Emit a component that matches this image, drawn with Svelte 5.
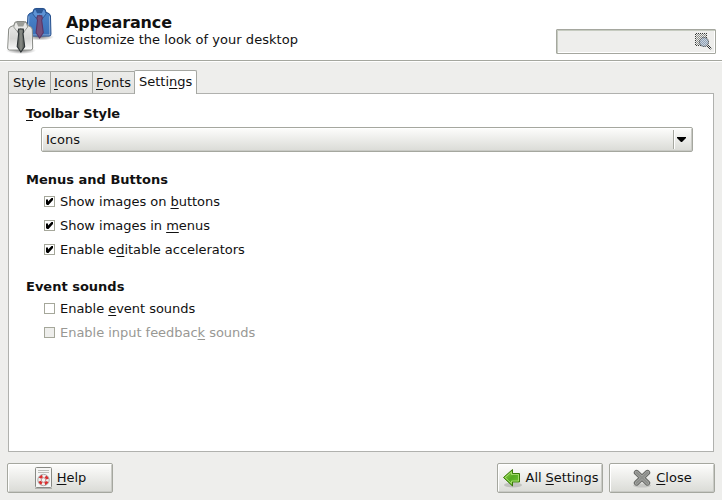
<script>
  const tabs = [
    { pre: 'Style', key: '', post: '', w: 42 },
    { pre: '', key: 'I', post: 'cons', w: 42 },
    { pre: '', key: 'F', post: 'onts', w: 42 },
    { pre: 'Setti', key: 'n', post: 'gs', w: 63, active: true }
  ];
  const menus = [
    { pre: 'Show images on ', key: 'b', post: 'uttons', checked: true },
    { pre: 'Show images in ', key: 'm', post: 'enus', checked: true },
    { pre: 'Enable e', key: 'd', post: 'itable accelerators', checked: true }
  ];
  const sounds = [
    { pre: 'Enable ', key: 'e', post: 'vent sounds' },
    { pre: 'Enable input feedbac', key: 'k', post: ' sounds', disabled: true }
  ];
</script>

{#snippet label(t)}<span class="label">{t.pre}<u>{t.key}</u>{t.post}</span>{/snippet}

{#snippet checks(items)}
  <div class="checks">
    {#each items as c}
      <div class="check" class:disabled={c.disabled}>
        <span class="box">
          {#if c.checked}
            <svg width="9" height="9" viewBox="0 0 9 9"><path d="M1 2.500H3V4.500L6.500 1H8V3L3.500 8H2L1 7Z" fill="#000" /></svg>
          {/if}
        </span>
        {@render label(c)}
      </div>
    {/each}
  </div>
{/snippet}

{#snippet shirt(body, edge, collar, tie, tieEdge)}
  <path d="M8 2.500Q8.500 1 10 1H18Q19.500 1 20 2.500L21 5Q25 6 25.500 8.500L26 27.500Q26 29.500 24 29.500H3Q1 29.500 1 27.500L2 8.500Q2.500 6 7 5Z" fill={body} stroke={edge} />
  <path d="M3 9 2.200 28.300H24.800L24.400 9" fill="none" stroke="#fff" stroke-opacity=".4" />
  <path d="M8.500 2H19.500L21 6.500 17.500 11 14 8 10.500 11 7 6.500Z" fill={collar} stroke={edge} stroke-width=".8" />
  <path d="M10 2.500H18L16.500 6H11.500Z" fill={edge} opacity=".8" />
  <path d="M12 8.500H16.500L17 11.500 16.300 13 18 26 14.200 31.500 10.500 26 12 13 11.300 11.500Z" fill={tie} stroke={tieEdge} stroke-width="1.100" />
{/snippet}

<div class="window">
  <header>
    <svg class="logo" width="48" height="48" viewBox="0 0 48 48">
      <defs>
        <linearGradient id="white" x2="0" y2="1"><stop stop-color="#eeeeec" /><stop offset=".6" stop-color="#d6d6d4" /><stop offset="1" stop-color="#fafafa" /></linearGradient>
        <linearGradient id="blue" x2="0" y2="1"><stop stop-color="#4d86cc" /><stop offset="1" stop-color="#3a70b8" /></linearGradient>
        <linearGradient id="black" x2="1" y2="0"><stop stop-color="#4c504c" /><stop offset=".5" stop-color="#8a8d88" /><stop offset="1" stop-color="#4c504c" /></linearGradient>
        <radialGradient id="shade"><stop stop-color="#000" stop-opacity=".5" /><stop offset="1" stop-color="#000" stop-opacity="0" /></radialGradient>
      </defs>
      <ellipse cx="34" cy="31" rx="14" ry="3.500" fill="url(#shade)" />
      <g transform="translate(20 1.500) scale(.96 .97)">{@render shirt('url(#blue)', '#204a87', '#5e93d5', '#75507b', '#5c3566')}</g>
      <ellipse cx="15" cy="44.500" rx="15" ry="3.500" fill="url(#shade)" />
      <g transform="translate(.700 14.500)">{@render shirt('url(#white)', '#888a85', '#e8e8e6', 'url(#black)', '#2e3436')}</g>
    </svg>
    <div class="titles">
      <h1>Appearance</h1>
      <p>Customize the look of your desktop</p>
    </div>
    <div class="search">
      <svg width="17" height="17" viewBox="0 0 17 17">
        <defs>
          <pattern id="dots" width="2" height="2" patternUnits="userSpaceOnUse"><path d="M0 0h1v1H0zM1 1h1v1H1z" fill="#eeeeec" /></pattern>
        </defs>
        <rect x=".5" y=".5" width="11" height="12" fill="#8c8e8a" stroke="#333533" />
        <path d="m12.500 12.500 2.500 2.500" stroke="#303436" stroke-width="3" stroke-linecap="round" />
        <circle cx="9" cy="9" r="4.500" fill="#7189a5" stroke="#3d4246" />
        <rect width="17" height="17" fill="url(#dots)" />
        <circle cx="9" cy="9" r="4.500" fill="#a9bacb" fill-opacity=".5" stroke="#666b70" stroke-opacity=".6" />
      </svg>
    </div>
  </header>

  <main>
    <nav>
      {#each tabs as t}
        <div class="tab" class:active={t.active} style:width="{t.w}px">{@render label(t)}</div>
      {/each}
    </nav>
    <section class="panel">
      <h2><u>T</u>oolbar Style</h2>
      <div class="combo">
        <span>Icons</span>
        <i><svg width="9" height="5" viewBox="0 0 9 5"><path d="M0 0H9V1L5 5H4L0 1Z" fill="#000" /></svg></i>
      </div>
      <h2 class="menus">Menus and Buttons</h2>
      {@render checks(menus)}
      <h2 class="events">Event sounds</h2>
      {@render checks(sounds)}
    </section>
  </main>

  <footer>
    <div class="button">
      <svg width="19" height="22" viewBox="0 0 19 22">
        <rect x="1.500" y=".5" width="16" height="20" rx="1" fill="#f6f6f5" stroke="#888a85" />
        <path d="M1 21.500H18" stroke="#000" stroke-opacity=".2" />
        <path d="M4 3.500H15M4 5.500H15" stroke="#bbbdb8" />
        <circle cx="9.500" cy="13" r="4.200" fill="none" stroke="#f2efed" stroke-width="3.600" />
        <circle cx="9.500" cy="13" r="4" fill="none" stroke="#dc3030" stroke-width="3" stroke-dasharray="3.140 3.140" stroke-dashoffset="-1.570" />
        <circle cx="9.500" cy="13" r="5.700" fill="none" stroke="#999" stroke-width=".8" />
        <circle cx="9.500" cy="13" r="2.300" fill="#f6f6f5" stroke="#a66" stroke-width=".7" />
      </svg>
      <span><u>H</u>elp</span>
    </div>
    <div class="button push">
      <svg width="20" height="20" viewBox="0 0 20 20">
        <defs><linearGradient id="green" x2="1" y2="1"><stop stop-color="#9bdc55" /><stop offset=".5" stop-color="#55aa20" /><stop offset="1" stop-color="#73c934" /></linearGradient></defs>
        <ellipse cx="11" cy="17" rx="9" ry="2.500" fill="#000" opacity=".15" />
        <path d="M1.500 9.500 10.500 1.500V5.500H17.500V14H10.500V18Z" fill="url(#green)" stroke="#3a7a08" stroke-linejoin="round" />
        <path d="M3.200 9.500 9.500 4V6.500H16.500V13H9.500V15.500Z" fill="none" stroke="#c4f08e" stroke-opacity=".65" />
      </svg>
      <span>All <u>S</u>ettings</span>
    </div>
    <div class="button">
      <svg width="20" height="20" viewBox="0 0 20 20">
        <ellipse cx="10" cy="17.500" rx="9" ry="2" fill="#000" opacity=".12" />
        <path d="M4.500 4.500 15.500 15M15.500 4.500 4.500 15" stroke="#666864" stroke-width="5.400" stroke-linecap="round" />
        <path d="M4.500 4.500 15.500 15M15.500 4.500 4.500 15" stroke="#a9aaa7" stroke-width="3.400" stroke-linecap="round" />
        <path d="M4.500 4.500 15.500 15M15.500 4.500 4.500 15" stroke="#8d8f8b" stroke-width="1.800" stroke-linecap="round" />
      </svg>
      <span><u>C</u>lose</span>
    </div>
  </footer>
</div>

<style>
  .window {
    box-sizing: border-box;
    width: 722px;
    height: 500px;
    display: flex;
    flex-direction: column;
    overflow: hidden;
    background: #eeeeec;
    color: #111;
    font: 13px/16px 'DejaVu Sans', sans-serif;
  }
  h1, h2, p { margin: 0; }
  u {
    text-decoration: underline 1px;
    text-underline-offset: 2px;
    text-decoration-skip-ink: none;
  }
  header {
    box-sizing: border-box;
    height: 61px;
    flex: none;
    display: flex;
    background: #fff;
    border-bottom: 1px solid #a5a79f;
    box-shadow: 0 1px #fff;
    padding: 6px 6px 0;
  }
  .titles { padding: 7px 0 0 12px; }
  h1 { font-size: 16px; line-height: 19px; letter-spacing: -0.15px; }
  p { line-height: 16px; letter-spacing: 0.03px; }
  .search {
    box-sizing: border-box;
    width: 160px;
    height: 25px;
    margin: 23px 0 0 auto;
    padding: 3px 3px;
    display: flex;
    justify-content: flex-end;
    background: #eeeeec;
    border: 1px solid #a5a79f;
    border-radius: 1px;
    box-shadow: inset 1px 1px #c6cbc0, inset -1px -1px #fff;
  }
  main {
    flex: none;
    padding: 9px 8px 0;
  }
  nav {
    height: 23px;
    display: flex;
    align-items: flex-end;
  }
  .tab {
    box-sizing: border-box;
    height: 22px;
    padding: 3px 0 0 4px;
    border: 1px solid #a5a7a2;
    border-right: 0;
    border-bottom: 0;
    background: linear-gradient(#ececea, #e4e4e1);
    white-space: nowrap;
  }
  .tab:nth-child(2), .tab:nth-child(3) { padding-left: 3px; }
  .tab.active {
    position: relative;
    height: 24px;
    margin-bottom: -1px;
    border-right: 1px solid #a5a7a2;
    border-radius: 2px 2px 0 0;
    background: #fff;
  }
  .panel {
    box-sizing: border-box;
    width: 706px;
    height: 359px;
    padding: 12px 17px;
    background: #fff;
    border: 1px solid #b0b1ae;
  }
  h2 { font-size: 13px; line-height: 16px; }
  h2:first-child { letter-spacing: -0.15px; }
  .combo {
    box-sizing: border-box;
    width: 652px;
    height: 25px;
    margin: 5px 0 0 15px;
    padding: 3px 6px 3px 4px;
    display: flex;
    justify-content: space-between;
    border: 1px solid #a5a79f;
    border-radius: 2px;
    background: linear-gradient(#fdfdfc, #dadbd6);
    box-shadow: inset 1px 1px #fff, inset -1px -1px #c9cac5;
  }
  .combo span { padding-top: 1px; }
  .combo i {
    width: 12px;
    height: 19px;
    margin-top: -1px;
    display: flex;
    align-items: center;
    justify-content: flex-end;
    border-left: 1px solid #a5a79f;
    box-shadow: inset 1px 0 #fff;
  }
  .menus { margin-top: 20px; }
  .events { margin-top: 17px; }
  .checks { padding: 2px 0 0 18px; }
  .check {
    height: 24px;
    display: flex;
    align-items: center;
    gap: 5px;
    letter-spacing: -0.03px;
  }
  .box {
    box-sizing: border-box;
    width: 11px;
    height: 11px;
    margin-bottom: 1px;
    display: flex;
    background: #fff;
    border: 1px solid #a5a79a;
  }
  .disabled { color: #989894; }
  .disabled .box { background: #eeeeec; }
  footer {
    display: flex;
    gap: 6px;
    padding: 11px 7px 0;
  }
  .button {
    box-sizing: border-box;
    width: 106px;
    height: 30px;
    display: flex;
    align-items: center;
    justify-content: center;
    gap: 4px;
    border: 1px solid #a5a79f;
    border-radius: 2px;
    background: linear-gradient(#fdfdfc, #dadbd6);
    box-shadow: inset 1px 1px #fff, inset -1px -1px #c9cac5;
  }
  .button svg { flex: none; }
  .push { margin-left: auto; letter-spacing: -0.06px; }
</style>
